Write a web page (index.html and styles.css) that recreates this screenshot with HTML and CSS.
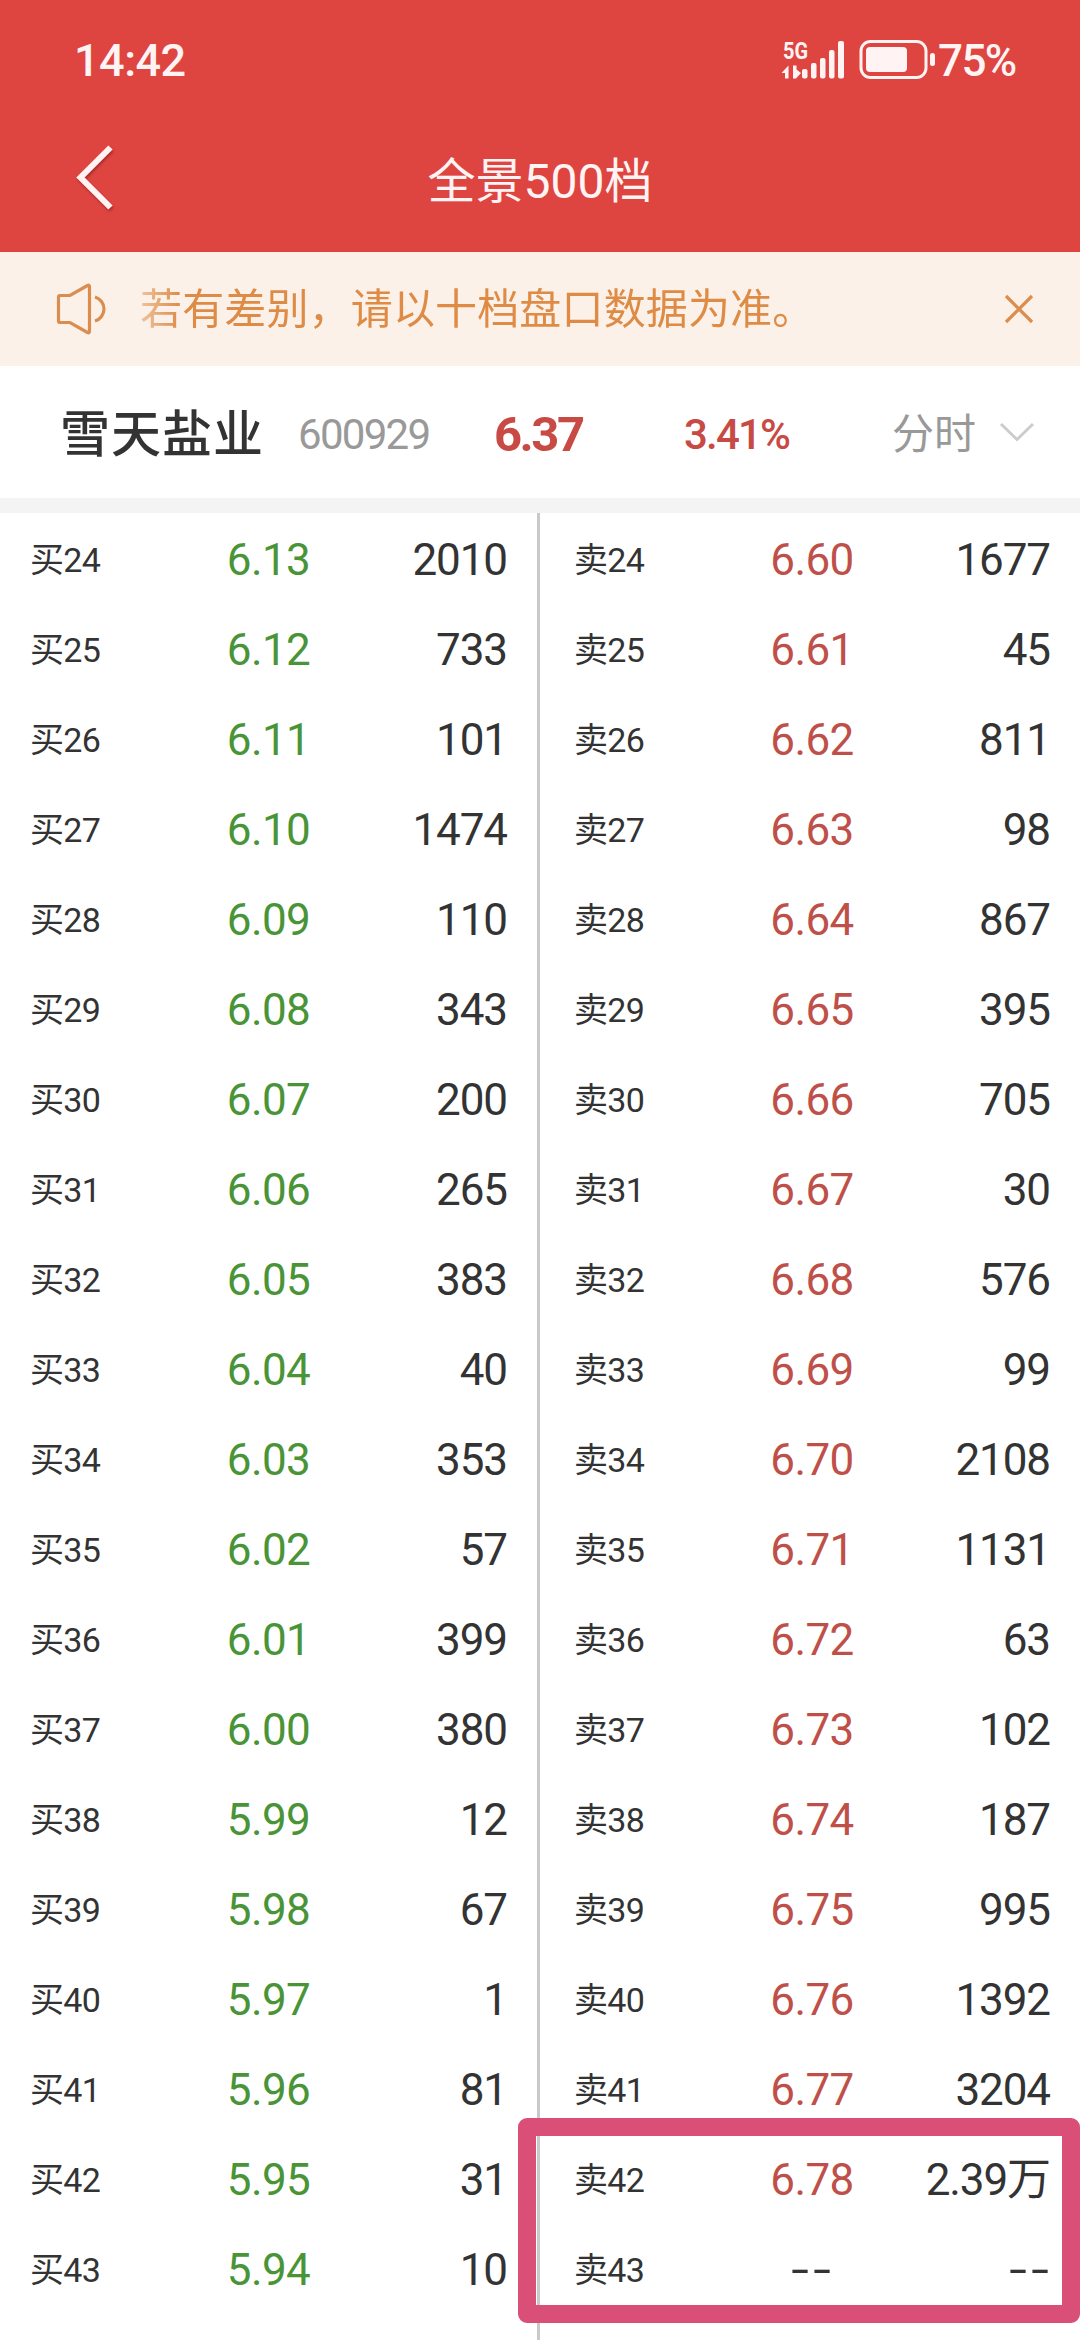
FILE: index.html
```
<!DOCTYPE html>
<html lang="zh-CN">

<head>
    <meta charset="UTF-8">
    <meta name="viewport" content="width=device-width, initial-scale=1.0">
    <title>全景500档</title>
    <link rel="stylesheet" href="styles.css">
</head>

<body>
    <div class="page">
        <header class="header">
            <div class="status">
                <span class="time">14:42</span>
                <svg class="status-icons" width="156" height="58" viewBox="780 31 156 58">
                    <text class="net" x="782" y="59" textLength="25" lengthAdjust="spacingAndGlyphs">5G</text>
                    <path d="M780.500 73L787.500 65.500V78.500H784V73ZM792 65.500V78.500H795L800 73L795.500 69.500V65.500Z" />
                    <rect x="801" y="69" width="5.500" height="9.500" rx="2" />
                    <rect x="810" y="63" width="5.500" height="15.500" rx="2" />
                    <rect x="819" y="58" width="5.500" height="20.500" rx="2" />
                    <rect x="828" y="50" width="5.500" height="28.500" rx="2" />
                    <rect x="837" y="41" width="6" height="37.500" rx="2" />
                    <rect class="battery" x="860" y="41.500" width="65" height="36" rx="9.500" />
                    <rect x="865" y="47" width="41" height="25" rx="4" />
                    <rect x="929" y="53" width="5" height="13" rx="2.500" />
                </svg>
                <span class="percent">75%</span>
            </div>
            <div class="nav">
                <svg class="back" width="44" height="72" viewBox="72 141 44 72">
                    <path d="M110.500 147.500L80.500 177.500L110.500 207.500" />
                </svg>
                <h1>全景500档</h1>
            </div>
        </header>

        <div class="notice">
            <svg width="56" height="54" viewBox="54 283 56 54">
                <path d="M59 296.500H69L86.500 286.500Q88.500 285.500 88.500 288V332Q88.500 334.500 86.500 333.500L69 323.500H59Q57.500 323.500 57.500 322V298Q57.500 296.500 59 296.500ZM94 298A12.500 12.500 0 0 1 94 322" />
            </svg>
            <span class="notice-text">若有差别，请以十档盘口数据为准。</span>
            <svg class="close" width="30" height="30" viewBox="0 0 30 30">
                <path d="M2 2L28 28M28 2L2 28" />
            </svg>
        </div>

        <div class="stock">
            <span class="stock-name">雪天盐业</span>
            <span class="stock-code">600929</span>
            <span class="stock-price">6.37</span>
            <span class="stock-rate">3.41%</span>
            <span class="stock-mode">分时</span>
            <svg width="36" height="20" viewBox="0 0 36 20">
                <path d="M2 2L18 17.500L34 2" />
            </svg>
        </div>

        <div class="book">
            <div class="side buy" id="buy"></div>
            <div class="side sell" id="sell">
                <div class="mark"></div>
            </div>
        </div>
    </div>
    <script>
        const buyVolumes = ['2010', '733', '101', '1474', '110', '343', '200', '265', '383', '40',
            '353', '57', '399', '380', '12', '67', '1', '81', '31', '10'];
        const sellVolumes = ['1677', '45', '811', '98', '867', '395', '705', '30', '576', '99',
            '2108', '1131', '63', '102', '187', '995', '1392', '3204', '2.39万', '--'];

        function addRow(side, label, price, volume) {
            const empty = volume === '--' ? ' class="empty"' : '';
            document.getElementById(side).insertAdjacentHTML('beforeend',
                `<div class="row">
                    <span class="label">${label}</span>
                    <span class="price"><span${empty}>${price}</span></span>
                    <span class="volume"><span${empty}>${volume}</span></span>
                </div>`);
        }

        // prices move one cent per level
        for (let i = 0; i < 20; i++) {
            addRow('buy', '买' + (24 + i), ((613 - i) / 100).toFixed(2), buyVolumes[i]);
            const price = sellVolumes[i] === '--' ? '--' : ((660 + i) / 100).toFixed(2);
            addRow('sell', '卖' + (24 + i), price, sellVolumes[i]);
        }
    </script>
</body>

</html>
```
FILE: styles.css
```
* {
    box-sizing: border-box;
}

body {
    margin: 0;
    background-color: #ffffff;
    color: #333333;
    font-family: Roboto, "Noto Sans CJK SC", sans-serif;
}

.page {
    width: 1080px;
    height: 2340px;
    overflow: hidden;
}

.header {
    height: 252px;
    background-color: #de4440;
    color: #fff4f3;
}

.status {
    display: flex;
    align-items: center;
    height: 120px;
    padding: 0 61px 0 74px;
    font-weight: 500;
}

.time {
    margin-right: auto;
    padding-top: 1px;
    font-size: 45px;
    letter-spacing: -0.5px;
}

.status-icons {
    fill: #fff4f3;
}

.net {
    font-size: 24px;
    font-weight: 700;
}

.battery {
    fill: none;
    stroke: #fff4f3;
    stroke-width: 3;
}

.percent {
    width: 82px;
    padding-top: 1px;
    padding-left: 1px;
    font-size: 44px;
    letter-spacing: -1.6px;
}

.nav {
    display: grid;
    grid-template-columns: 200px 1fr 200px;
    align-items: center;
    height: 120px;
}

.back {
    margin: -6px 0 0 72px;
    fill: none;
    stroke: #fff4f3;
    stroke-width: 6;
    filter: drop-shadow(1px 2px 1px rgba(120, 20, 20, 0.5));
}

h1 {
    margin: 0;
    padding-top: 3px;
    font-size: 48px;
    font-weight: 400;
    line-height: 72px;
    text-align: center;
}

.notice {
    display: flex;
    align-items: center;
    height: 114px;
    padding: 0 46px 0 55px;
    background-color: #fcf1e8;
    color: #de8b46;
}

.notice svg {
    fill: none;
    stroke: #da8d4e;
    stroke-width: 3.2;
}

.notice-text {
    margin-left: 29px;
    padding-top: 2px;
    font-size: 42px;
    line-height: 60px;
    letter-spacing: 0.15px;
    -webkit-mask-image: linear-gradient(to right, rgba(0, 0, 0, 0.45), #000 40px);
    mask-image: linear-gradient(to right, rgba(0, 0, 0, 0.45), #000 40px);
}

.close {
    margin-left: auto;
}

.stock {
    display: grid;
    grid-template-columns: 238px 196px 190px 208px 107px 36px;
    align-items: center;
    height: 147px;
    padding: 0 45px 0 60px;
    border-bottom: 15px solid #f4f4f4;
    line-height: 72px;
}

.stock span {
    padding-top: 5px;
}

.stock-name {
    font-size: 50px;
    font-weight: 500;
    letter-spacing: 1px;
}

.stock-code {
    color: #999999;
    font-size: 42px;
    letter-spacing: -1.7px;
}

.stock-price {
    color: #c84a44;
    font-size: 49px;
    font-weight: 700;
    letter-spacing: -2.5px;
}

.stock-rate {
    color: #c84a44;
    font-size: 42px;
    font-weight: 500;
    letter-spacing: -1.8px;
}

.stock-mode {
    color: #999999;
    font-size: 42px;
}

.stock svg {
    fill: none;
    stroke: #cccccc;
    stroke-width: 3;
}

.book {
    display: grid;
    grid-template-columns: 540px 540px;
    height: 1827px;
}

.side {
    padding-top: 2px;
}

.buy {
    padding-left: 30px;
    padding-right: 30px;
    border-right: 3px solid #c9c8ca;
}

.sell {
    position: relative;
    padding-left: 34px;
    padding-right: 30px;
}

.row {
    display: grid;
    grid-template-columns: 130px 1fr 130px;
    align-items: center;
    height: 90px;
    font-size: 44px;
    line-height: 60px;
    letter-spacing: -0.6px;
}

.label {
    font-size: 34px;
    letter-spacing: -0.7px;
}

.price {
    text-align: center;
}

.buy .price {
    color: #4a9438;
}

.sell .price {
    color: #bf5049;
}

.volume {
    text-align: right;
    letter-spacing: -1.1px;
}

.empty {
    display: inline-block;
    color: #333333;
    letter-spacing: 3px;
    margin-right: -3px;
    transform: scaleX(1.45);
}

.volume .empty {
    transform-origin: right;
}

/* highlighted levels */
.mark {
    position: absolute;
    top: 1605px;
    left: -22px;
    width: 562px;
    height: 205px;
    border: 18px solid #da4f78;
    border-radius: 9px;
}
```
